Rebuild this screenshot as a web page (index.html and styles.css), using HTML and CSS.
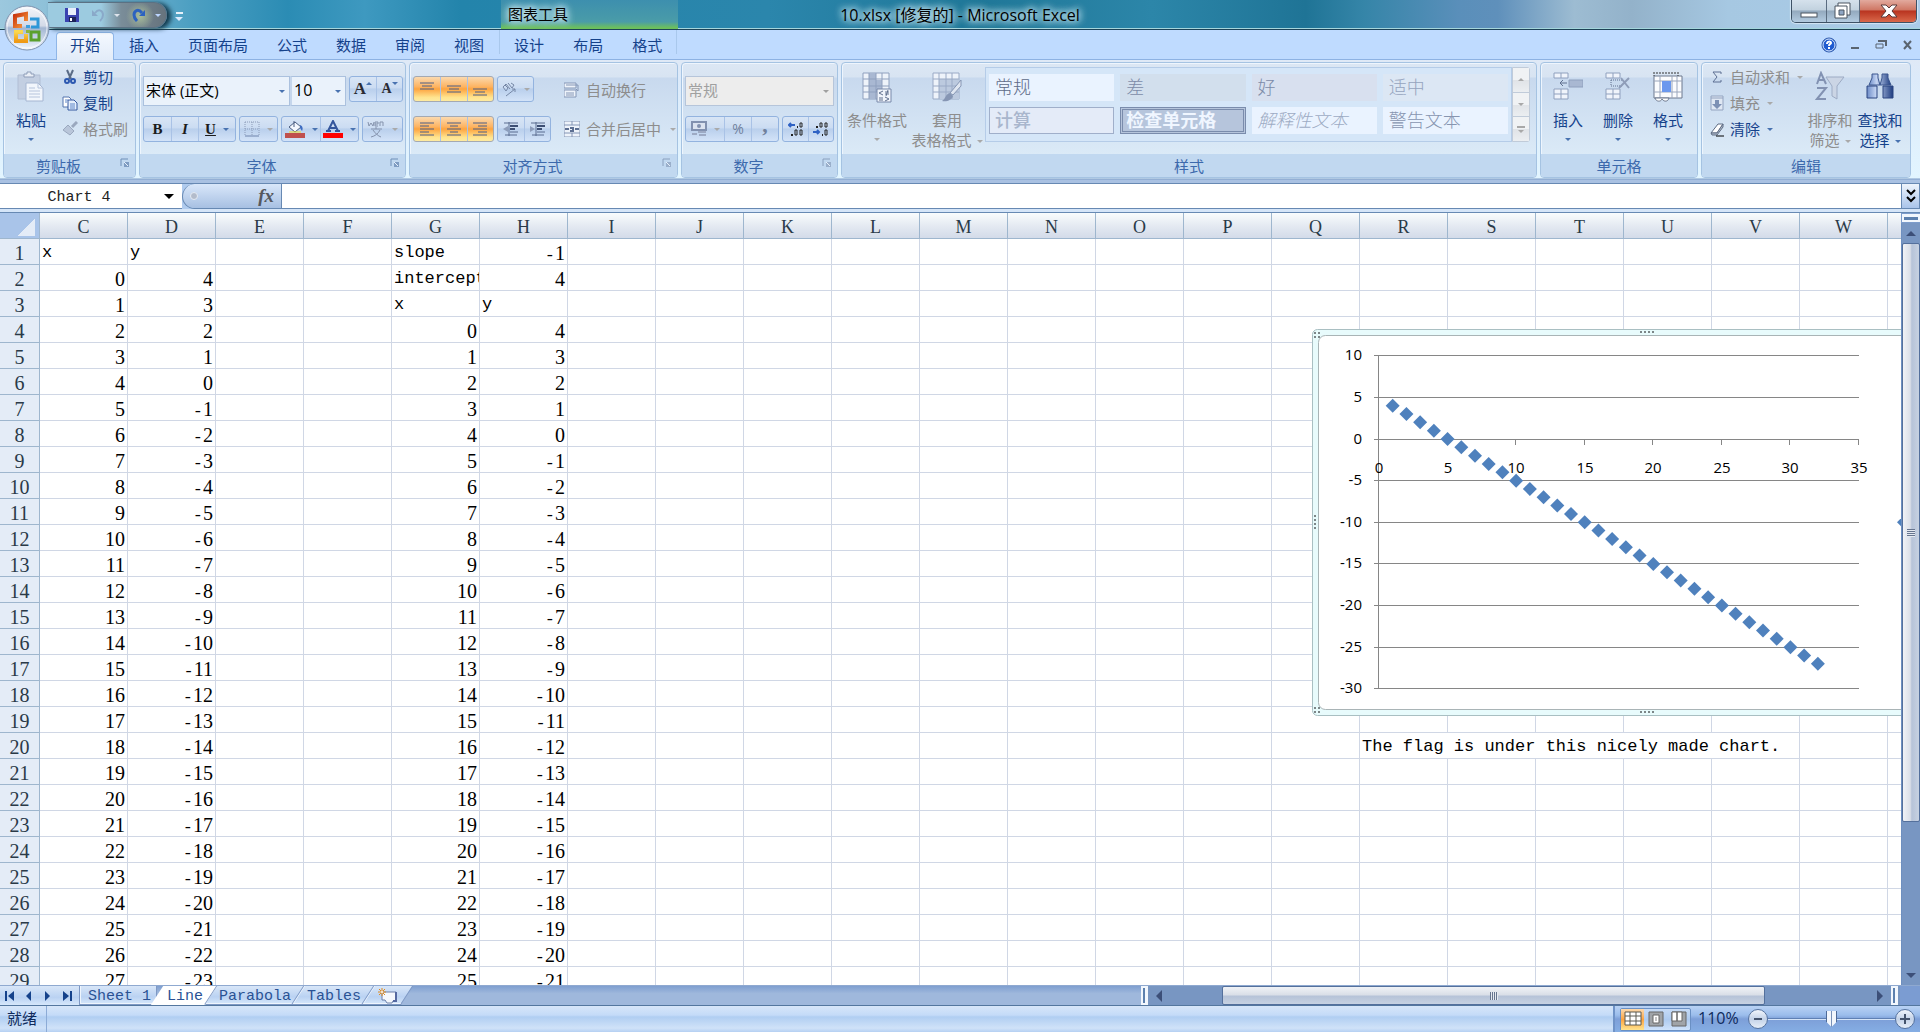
FILE: index.html
```html
<!DOCTYPE html>
<html lang="zh-CN">
<head>
<meta charset="utf-8">
<title>10.xlsx [修复的] - Microsoft Excel</title>
<link rel="stylesheet" href="styles.css">
</head>
<body>
<header class="titlebar">
  <div class="title-left">
    <button class="orb" aria-label="Office">
      <svg width="46" height="46" viewBox="0 0 46 46">
        <defs>
          <linearGradient id="orbFill" x1="0" y1="0" x2="0" y2="1"><stop offset="0" stop-color="#f4f6fa"/><stop offset=".45" stop-color="#d3dae8"/><stop offset=".5" stop-color="#a3b6d2"/><stop offset="1" stop-color="#f2f8ff"/></linearGradient>
          <linearGradient id="red" x1="0" y1="0" x2="1" y2="1"><stop offset="0" stop-color="#c8340c"/><stop offset="1" stop-color="#f99a3c"/></linearGradient>
          <linearGradient id="yel" x1="0" y1="0" x2="0" y2="1"><stop offset="0" stop-color="#fbd84c"/><stop offset="1" stop-color="#ef9a16"/></linearGradient>
        </defs>
        <circle cx="23" cy="23" r="22" fill="url(#orbFill)" stroke="#7f93ae"/>
        <circle cx="23" cy="23" r="20" fill="none" stroke="#fff" stroke-opacity=".7"/>
        <path d="M18 21h-7V11l11-2v7" fill="none" stroke="url(#red)" stroke-width="4"/>
        <path d="M26 14h8v8h-7" fill="none" stroke="#2e97d8" stroke-width="3"/>
        <path d="M19 27h-7v9h10v-7" fill="none" stroke="url(#yel)" stroke-width="4"/>
        <path d="M27 27h8v8h-8z" fill="none" stroke="#5aa02c" stroke-width="3"/>
        <path d="M22 20h4v3h-4z" fill="#3a9fe0"/>
        <path d="M22 25h4v3h-4z" fill="#8cb83c"/>
      </svg>
    </button>
    <div class="qat">
      <button class="flat" aria-label="保存"><svg width="14" height="14" viewBox="0 0 14 14"><path d="M0 0h13l1 1v13H0z" fill="#3a43b0"/><path d="M3 0h8v7H3z" fill="#e8eefb"/><path d="M4 9h7v5H4z" fill="#1c2358"/><path d="M5 10h2v3H5z" fill="#fff"/></svg></button>
      <button class="flat" aria-label="撤消"><svg width="14" height="14" viewBox="0 0 14 14"><path d="M1 2v6h6z" fill="#8aa9c9"/><path d="M4 5c4-5 8-2 8 2 0 2-1 4-3 6" fill="none" stroke="#8aa9c9" stroke-width="2"/></svg><i class="caret pale"></i></button>
      <button class="flat" aria-label="恢复"><svg width="14" height="14" viewBox="0 0 14 14"><path d="M13 2v6H7z" fill="#2c62c0"/><path d="M10 5C6 0 2 3 2 7c0 2 1 4 3 6" fill="none" stroke="#2c62c0" stroke-width="3"/></svg><i class="caret blue"></i></button>
    </div>
    <button class="flat qat-more" aria-label="自定义快速访问工具栏"><i></i><i class="caret"></i></button>
    <div class="context-title"><span>图表工具</span></div>
  </div>
  <h1>10.xlsx [修复的] - Microsoft Excel</h1>
  <div class="window-buttons">
    <button aria-label="最小化"><svg width="34" height="22" viewBox="0 0 34 22"><rect x="9" y="13" width="16" height="4" fill="#fff" stroke="#4a5460"/></svg></button>
    <button aria-label="还原"><svg width="32" height="22" viewBox="0 0 32 22"><path d="M11 3h12v12h-12z" fill="#fff" stroke="#4a5460"/><path d="M8 6h12v12H8z" fill="#fff" stroke="#4a5460"/><path d="M12 10h5v5h-5z" fill="#8fa6c4" stroke="#4a5460"/></svg></button>
    <button class="close" aria-label="关闭"><svg width="56" height="22" viewBox="0 0 56 22"><path d="M21 5h5l3 3 3-3h5l-5 6 5 6h-5l-3-3-3 3h-5l5-6z" fill="#fff" stroke="#5a3a3a"/></svg></button>
  </div>
</header>

<nav class="tabs">
  <button class="tab active">开始</button>
  <button class="tab">插入</button>
  <button class="tab">页面布局</button>
  <button class="tab">公式</button>
  <button class="tab">数据</button>
  <button class="tab">审阅</button>
  <button class="tab">视图</button>
  <div class="context-tabs">
    <button class="tab">设计</button>
    <button class="tab">布局</button>
    <button class="tab">格式</button>
  </div>
  <div class="doc-buttons">
    <button class="flat" aria-label="帮助"><svg width="16" height="16" viewBox="0 0 16 16"><circle cx="8" cy="8" r="7" fill="#1f5bd0" stroke="#2a56a8"/><circle cx="8" cy="8" r="6" fill="none" stroke="#dce9fc"/><path d="M6 7c0-3 4-3 4-1 0 1-2 1-2 3M8 10v2" fill="none" stroke="#fff" stroke-width="2"/></svg></button>
    <button class="flat" aria-label="最小化窗口"><svg width="16" height="16" viewBox="0 0 16 16"><path d="M4 11h8" stroke="#5a6470" stroke-width="2"/></svg></button>
    <button class="flat" aria-label="还原窗口"><svg width="16" height="16" viewBox="0 0 16 16"><path d="M5 4h8v5" fill="none" stroke="#5a6470" stroke-width="2"/><path d="M3 7h7v4H3z" fill="none" stroke="#5a6470"/></svg></button>
    <button class="flat" aria-label="关闭窗口"><svg width="16" height="16" viewBox="0 0 16 16"><path d="M5 4l7 8M12 4l-7 8" stroke="#5a6470" stroke-width="2"/></svg></button>
  </div>
</nav>

<section class="ribbon">
  <div class="group clipboard">
    <div class="body">
      <button class="big"><svg width="30" height="32" viewBox="0 0 30 32"><path d="M2 4h22v24H2z" fill="#c3cfe2" stroke="#b1bed4"/><path d="M8 6V3h3V1h4v2h3v3z" fill="#e9eef6" stroke="#8e9db8"/><path d="M10 12h12l5 5v13H10z" fill="#f2f6fc" stroke="#a5b6d2"/><path d="M22 12v5h5M13 17h6M13 20h11M13 23h11M13 26h11" fill="none" stroke="#b6c4dc"/></svg><span>粘贴</span><i class="caret"></i></button>
      <div class="stack">
        <button class="small"><svg width="16" height="16" viewBox="0 0 16 16"><path d="M5 1l4 9M11 1L7 10" stroke="#5b6c86" stroke-width="2"/><circle cx="5" cy="12" r="2" fill="none" stroke="#2c58b0" stroke-width="2"/><circle cx="11" cy="12" r="2" fill="none" stroke="#2c58b0" stroke-width="2"/></svg><span>剪切</span></button>
        <button class="small"><svg width="16" height="16" viewBox="0 0 16 16"><path d="M1 2h6l2 2v8H1z" fill="#fff" stroke="#5474ae"/><path d="M6 5h6l3 3v7H6z" fill="#e6effc" stroke="#3558a0"/><path d="M8 9h5M8 11h5M8 13h5M3 5h3M3 7h2" stroke="#5f86c8"/></svg><span>复制</span></button>
        <button class="small" disabled><svg width="16" height="16" viewBox="0 0 16 16"><path d="M15 1l-5 5" stroke="#9aa8be" stroke-width="3"/><path d="M6 4l6 6-4 4-7-5z" fill="#b9c6da" stroke="#9aa8be"/></svg><span>格式刷</span></button>
      </div>
    </div>
    <footer><span>剪贴板</span><button class="launch" aria-label="剪贴板选项"><svg width="9" height="9" viewBox="0 0 9 9"><path d="M1 8V1h7" fill="none" stroke="#6f8fb8"/><path d="M4 4h5v5H4z" fill="#7f9cc2"/><path d="M4 4l4 4" stroke="#e8f1fb"/></svg></button></footer>
  </div>

  <div class="group font">
    <div class="body rows">
      <div class="line">
        <div class="combos">
          <label class="combo font-name"><select aria-label="字体"><option>宋体 (正文)</option></select></label>
          <label class="combo font-size"><select aria-label="字号"><option>10</option></select></label>
        </div>
        <div class="cluster">
          <button aria-label="增大字号" class="serif-lg">A<i class="up"></i></button>
          <button aria-label="减小字号" class="serif-sm">A<i class="down"></i></button>
        </div>
      </div>
      <div class="line">
        <div class="cluster wide"><button class="biu"><b>B</b></button><button class="biu"><em>I</em></button><button class="biu underline"><u>U</u><i class="caret"></i></button></div>
        <div class="cluster"><button disabled aria-label="边框"><svg width="16" height="16" viewBox="0 0 16 16"><path d="M1 1h14M1 8h14M1 1v14M8 1v14M15 1v14" stroke="#8b9bb8" stroke-dasharray="1 1"/><path d="M1 15h14" stroke="#6f84ac"/></svg><i class="caret"></i></button></div>
        <div class="cluster fills"><button aria-label="填充颜色"><svg width="20" height="18" viewBox="0 0 20 18"><path d="M4 7l6-5 6 5-6 5z" fill="#f4f8fe" stroke="#4a5d80"/><path d="M9 7V1" stroke="#4a5d80"/><path d="M15 5c3 1 3 4 2 6l-2-3z" fill="#3d6cc0"/><path d="M4 12h12" stroke="#f4e020"/><path d="M0 13h20v5H0z" fill="#c0504d"/></svg><i class="caret"></i></button><button aria-label="字体颜色"><svg width="20" height="18" viewBox="0 0 20 18"><path d="M5 11L10 1l5 10M7 8h6M3 11h5M12 11h5" fill="none" stroke="#34569c" stroke-width="2"/><path d="M0 13h20v5H0z" fill="#f00"/></svg><i class="caret"></i></button></div>
        <div class="cluster"><button disabled aria-label="拼音指南"><svg width="18" height="18" viewBox="0 0 18 18"><path d="M1 2l1 4 2-3 2 3 1-4M8 4h3V2H8v4h3M13 6V2h3v4M10 0l1-1M4 9h11M9 7v2M6 10c2 3 5 6 8 7M13 10c-2 4-5 6-9 7" fill="none" stroke="#8492ac"/></svg><i class="caret"></i></button></div>
      </div>
    </div>
    <footer><span>字体</span><button class="launch" aria-label="字体选项"><svg width="9" height="9" viewBox="0 0 9 9"><path d="M1 8V1h7" fill="none" stroke="#6f8fb8"/><path d="M4 4h5v5H4z" fill="#7f9cc2"/><path d="M4 4l4 4" stroke="#e8f1fb"/></svg></button></footer>
  </div>

  <div class="group align">
    <div class="body columns">
      <div class="rows">
        <div class="line">
          <div class="cluster on"><button aria-label="顶端对齐"><svg width="16" height="16" viewBox="0 0 16 16"><path d="M1 2h14M3 5h10M1 8h14" stroke="#4d5f86"/></svg></button><button aria-label="垂直居中"><svg width="16" height="16" viewBox="0 0 16 16"><path d="M1 5h14M3 8h10M1 11h14" stroke="#4d5f86"/></svg></button><button aria-label="底端对齐"><svg width="16" height="16" viewBox="0 0 16 16"><path d="M1 8h14M3 11h10M1 14h14" stroke="#4d5f86"/></svg></button></div>
          <div class="cluster orient"><button disabled aria-label="方向"><svg width="16" height="16" viewBox="0 0 16 16"><path d="M2 6l3-3 4 5M2 6l3 4 2-3-3-3M7 2l4 5 2-3-3-2M5 15L14 8M14 8h-3M14 8v3" fill="none" stroke="#7687a6"/></svg><i class="caret"></i></button></div>
        </div>
        <div class="line">
          <div class="cluster on"><button aria-label="左对齐"><svg width="16" height="16" viewBox="0 0 16 16"><path d="M1 2h14M1 5h9M1 8h14M1 11h9M1 14h14" stroke="#4d5f86"/></svg></button><button aria-label="居中"><svg width="16" height="16" viewBox="0 0 16 16"><path d="M1 2h14M4 5h8M1 8h14M4 11h8M1 14h14" stroke="#4d5f86"/></svg></button><button aria-label="右对齐"><svg width="16" height="16" viewBox="0 0 16 16"><path d="M1 2h14M6 5h9M1 8h14M6 11h9M1 14h14" stroke="#4d5f86"/></svg></button></div>
          <div class="cluster indent"><button aria-label="减少缩进"><svg width="16" height="16" viewBox="0 0 16 16"><path d="M1 2h14M7 11h8M2 14h12M6 1v14" stroke="#5b6d90"/><path d="M7 5h8M7 8h5" stroke="#3d4f74" stroke-width="2"/><path d="M5 5L0 8l5 3z" fill="#8d9dba"/></svg></button><button aria-label="增加缩进"><svg width="16" height="16" viewBox="0 0 16 16"><path d="M1 2h14M7 11h8M2 14h12M6 1v14" stroke="#5b6d90"/><path d="M7 5h8M7 8h5" stroke="#3d4f74" stroke-width="2"/><path d="M0 5l5 3-5 3z" fill="#8d9dba"/></svg></button></div>
        </div>
      </div>
      <div class="rule"></div>
      <div class="wraps">
        <button class="small" disabled><svg width="16" height="16" viewBox="0 0 16 16"><path d="M0 1h12v5H0zM0 8h12v7H0z" fill="#eef3fa" stroke="#8496b6"/><path d="M2 3h12M2 11h8M2 13h8M14 3v6l-2-2" fill="none" stroke="#8496b6"/></svg><span>自动换行</span></button>
        <button class="small" disabled><svg width="16" height="16" viewBox="0 0 16 16"><path d="M0 0h16v16H0zM0 4h16M0 12h16M8 0v4M8 12v4" fill="#eef3fa" stroke="#8496b6"/><path d="M1 8h4M11 8h4M6 7h3v3H6" fill="none" stroke="#5d6f92" stroke-width="2"/></svg><span>合并后居中</span><i class="caret"></i></button>
      </div>
    </div>
    <footer><span>对齐方式</span><button class="launch" aria-label="对齐选项"><svg width="9" height="9" viewBox="0 0 9 9"><path d="M1 8V1h7" fill="none" stroke="#8aa0be"/><path d="M4 4h5v5H4z" fill="#9aafcb"/><path d="M4 4l4 4" stroke="#e8f1fb"/></svg></button></footer>
  </div>

  <div class="group number">
    <div class="body rows">
      <label class="combo off"><select aria-label="数字格式" disabled><option>常规</option></select></label>
      <div class="line">
        <div class="cluster money"><button disabled aria-label="会计数字格式"><svg width="16" height="16" viewBox="0 0 16 16"><path d="M1 1h14v8H1z" fill="#dbe3f0" stroke="#8191b0" stroke-width="2"/><circle cx="8" cy="5" r="2" fill="#8191b0"/><path d="M7 10h8v2H7zM8 13h7v2H8zM1 12h5v2H1z" fill="#9daac4"/></svg><i class="caret"></i></button><button disabled>%</button><button disabled class="comma">,</button></div>
        <div class="cluster"><button class="dec" aria-label="增加小数位数"><svg width="16" height="14" viewBox="0 0 16 14"><path d="M7 3H1M3 1L1 3l2 2" fill="none" stroke="#2f62c4" stroke-width="2"/><path d="M9 5h1M3 13h2" stroke="#222" stroke-width="2"/><path d="M12 1h2v4h-2zM7 8h2v5H7zM12 8h2v5h-2z" fill="none" stroke="#222"/></svg></button><button class="dec" aria-label="减少小数位数"><svg width="16" height="14" viewBox="0 0 16 14"><path d="M0 10h6M4 8l2 2-2 2" fill="none" stroke="#2f62c4" stroke-width="2"/><path d="M3 5h2M9 13h1" stroke="#222" stroke-width="2"/><path d="M7 1h2v4H7zM12 1h2v4h-2zM12 8h2v5h-2z" fill="none" stroke="#222"/></svg></button></div>
      </div>
    </div>
    <footer><span>数字</span><button class="launch" aria-label="数字选项"><svg width="9" height="9" viewBox="0 0 9 9"><path d="M1 8V1h7" fill="none" stroke="#8aa0be"/><path d="M4 4h5v5H4z" fill="#9aafcb"/><path d="M4 4l4 4" stroke="#e8f1fb"/></svg></button></footer>
  </div>

  <div class="group styles">
    <div class="body">
      <button class="big w70" disabled><svg width="30" height="32" viewBox="0 0 30 32"><path d="M1 2h26v26H1z" fill="#eef3fa" stroke="#8fa0be"/><path d="M7 2h7v26H7zM14 9h6v12h-6z" fill="#a9b8d2"/><path d="M1 8h26M1 15h26M1 21h26M7 2v26M14 2v26M20 2v26" stroke="#8fa0be"/><path d="M15 18h14v13H15z" fill="#f0f4fb" stroke="#7889aa"/><path d="M21 20l-4 2 4 2M23 21h4M23 23h4M26 19l-2 6M17 27h4M17 29h4M23 26l4 2-4 2" fill="none" stroke="#61718f"/></svg><span>条件格式</span><i class="caret"></i></button>
      <button class="big w70" disabled><svg width="30" height="32" viewBox="0 0 30 32"><path d="M1 2h26v26H1z" fill="#eef3fa" stroke="#9aaac6"/><path d="M7 8h20v20H7z" fill="#bccadf"/><path d="M1 8h26M1 15h26M1 21h26M7 2v26M14 2v26M20 2v26" stroke="#9aaac6"/><path d="M29 9v6l-8 9-3-2z" fill="#dfe6f1" stroke="#8696b4"/><path d="M18 22l3 3c-1 4-6 6-11 5 4-2 3-7 8-8z" fill="#8696b4"/></svg><span>套用<br>表格格式<i class="caret"></i></span></button>
      <div class="gallery">
        <div class="swatches">
          <button>常规</button><button class="bad">差</button><button class="good">好</button><button class="neutral">适中</button>
          <button class="calc">计算</button><button class="check">检查单元格</button><button class="explain">解释性文本</button><button class="warn">警告文本</button>
        </div>
        <div class="gallery-nav">
          <button disabled aria-label="上一行"><i class="up"></i></button>
          <button disabled aria-label="下一行"><i class="down"></i></button>
          <button disabled aria-label="其他"><i class="bar"></i><i class="down"></i></button>
        </div>
      </div>
    </div>
    <footer><span>样式</span></footer>
  </div>

  <div class="group cells">
    <div class="body">
      <button class="big w50"><svg width="30" height="32" viewBox="0 0 30 32"><path d="M1 2h14v5H1zM1 18h14v10H1zM8 2v5M8 18v10M1 23h14" fill="#f0f4fb" stroke="#8fa0be"/><path d="M16 9h14v7H16z" fill="#a9b8d2" stroke="#8fa0be"/><path d="M14 12H7M10 9l-3 3 3 3" fill="none" stroke="#61718f"/></svg><span>插入</span><i class="caret"></i></button>
      <button class="big w50"><svg width="30" height="32" viewBox="0 0 30 32"><path d="M3 2h14v5H3zM3 18h14v10H3zM10 2v5M10 18v10M3 23h14" fill="#f0f4fb" stroke="#8fa0be"/><path d="M8 9h12M8 15h12M8 9v6" stroke="#61718f" stroke-dasharray="1 1"/><path d="M18 7l8 10M26 7L16 17" stroke="#8f9db8" stroke-width="2"/></svg><span>删除</span><i class="caret"></i></button>
      <button class="big w50"><svg width="32" height="32" viewBox="0 0 32 32"><path d="M2 5h28v22H2z" fill="#fbfcfe" stroke="#6c788e"/><path d="M2 10h28M2 21h28M8 5v22M20 5v22M25 5v22" stroke="#9aa6bc"/><path d="M10 10h9v11h-9z" fill="#6b98ee"/><path d="M2 1v4M26 1v4M4 2h20" stroke="#333" stroke-dasharray="2 1"/><path d="M3 27c1 4 6 4 7 1 2 3 6 3 7-1z" fill="#fff" stroke="#6c788e"/></svg><span>格式</span><i class="caret"></i></button>
    </div>
    <footer><span>单元格</span></footer>
  </div>

  <div class="group edit">
    <div class="body">
      <div class="stack">
        <button class="small" disabled><svg width="14" height="16" viewBox="0 0 14 16"><path d="M11 5V3H3l4 5-4 5h8v-2" fill="none" stroke="#5d6f92"/></svg><span>自动求和</span><i class="caret"></i></button>
        <button class="small" disabled><svg width="14" height="16" viewBox="0 0 14 16"><path d="M1 1h12v14H1z" fill="#dfe7f3" stroke="#93a3c0"/><path d="M1 3h12" stroke="#93a3c0"/><path d="M5 5h4v4h3l-5 5-5-5h3z" fill="#7d90b4"/></svg><span>填充</span><i class="caret"></i></button>
        <button class="small"><svg width="14" height="16" viewBox="0 0 14 16"><path d="M8 3h5L7 12H1z" fill="#fff" stroke="#5f6d84"/><path d="M1 12l6 0 6-9v3l-6 8H2z" fill="#b9c2d0" stroke="#5f6d84"/><path d="M6 15h8" stroke="#000"/></svg><span>清除</span><i class="caret"></i></button>
      </div>
      <button class="big w50" disabled><svg width="30" height="32" viewBox="0 0 30 32"><path d="M2 13L6 2l5 11M4 9h5M2 17h9L2 28h9" fill="none" stroke="#8292b2" stroke-width="2"/><path d="M11 6h18l-7 9v13l-5-3V15z" fill="#cbd5e5" stroke="#9dabc4"/></svg><span>排序和<br>筛选<i class="caret"></i></span></button>
      <button class="big w50"><svg width="30" height="32" viewBox="0 0 30 32"><defs><linearGradient id="bino"><stop offset="0" stop-color="#6d8cc8"/><stop offset=".35" stop-color="#c4d4f2"/><stop offset="1" stop-color="#1e3c80"/></linearGradient></defs><path d="M7 3h6v4l2 7H4l3-7zM17 3h6v4l3 7H15l2-7z" fill="url(#bino)" stroke="#3c578f"/><path d="M2 15h10v12H2zM18 15h10v12H18z" fill="url(#bino)" stroke="#2a4580"/></svg><span>查找和<br>选择<i class="caret"></i></span></button>
    </div>
    <footer><span>编辑</span></footer>
  </div>
</section>

<section class="formula-bar">
  <label class="name-box"><input aria-label="名称框" value="Chart 4"><i class="caret"></i></label>
  <button class="fx" aria-label="插入函数"><i class="dot"></i><em>fx</em></button>
  <input class="formula" aria-label="编辑栏">
  <button class="expand" aria-label="展开编辑栏"><svg width="16" height="16" viewBox="0 0 16 16"><path d="M4 2l4 4 4-4M4 9l4 4 4-4" fill="none" stroke="#000" stroke-width="2"/></svg></button>
</section>

<main class="sheet">
  <div class="viewport">
    <table class="grid"><thead><tr id="letters"><th class="corner"><i></i></th></tr></thead><tbody id="rows"></tbody></table>
    <svg class="chart" id="chart" width="1160" height="388" role="img" aria-label="Chart 4"></svg>
  </div>
  <div class="vscroll">
    <i class="split"></i>
    <button class="flat" aria-label="向上滚动"><i class="up"></i></button>
    <div class="thumb"><i></i></div>
    <button class="flat" aria-label="向下滚动"><i class="down"></i></button>
  </div>
</main>

<section class="sheet-bar">
  <div class="sheet-tabs">
    <div class="nav">
      <button class="flat" aria-label="第一张"><svg width="10" height="12" viewBox="0 0 10 12"><path d="M1 1v10" stroke="#15428b" stroke-width="2"/><path d="M9 1v10L3 6z" fill="#15428b"/></svg></button>
      <button class="flat" aria-label="上一张"><svg width="10" height="12" viewBox="0 0 10 12"><path d="M7 1v10L2 6z" fill="#15428b"/></svg></button>
      <button class="flat" aria-label="下一张"><svg width="10" height="12" viewBox="0 0 10 12"><path d="M2 1v10l5-5z" fill="#15428b"/></svg></button>
      <button class="flat" aria-label="最后一张"><svg width="10" height="12" viewBox="0 0 10 12"><path d="M1 1v10l6-5z" fill="#15428b"/><path d="M9 1v10" stroke="#15428b" stroke-width="2"/></svg></button>
    </div>
    <button class="stab first">Sheet 1</button>
    <button class="stab current">Line</button>
    <button class="stab">Parabola</button>
    <button class="stab">Tables</button>
    <button class="stab new" aria-label="插入工作表"><svg width="20" height="16" viewBox="0 0 20 16"><path d="M5 4h14v9h-3l-1 2h-5l-2-3H5z" fill="#f4f7fc" stroke="#6b7fa8"/><path d="M19 4v9h-3" fill="none" stroke="#5468a0" stroke-width="2"/><path d="M5 0v8M1 4h8M2 1l6 6M8 1L2 7" stroke="#e08a1c"/><circle cx="5" cy="4" r="1" fill="#fff"/></svg></button>
  </div>
  <div class="hscroll">
    <i class="split"></i>
    <button class="flat" aria-label="向左滚动"><i class="left"></i></button>
    <div class="thumb"><i></i></div>
    <button class="flat" aria-label="向右滚动"><i class="right"></i></button>
    <i class="split"></i>
  </div>
</section>

<footer class="status">
  <span class="ready">就绪</span>
  <div class="zoom">
    <div class="views">
      <button class="on" aria-label="普通"><svg width="18" height="16" viewBox="0 0 18 16"><path d="M1 1h16v13H1zM1 5h16M1 10h16M6 1v13M12 1v13" fill="#fff" stroke="#5a5a52"/></svg></button>
      <button aria-label="页面布局"><svg width="16" height="16" viewBox="0 0 16 16"><path d="M1 1h14v14H1z" fill="#a0a4a8" stroke="#666"/><path d="M5 4h6v8H5z" fill="#fff" stroke="#666"/><path d="M7 7h2M7 9h2" stroke="#888"/></svg></button>
      <button aria-label="分页预览"><svg width="16" height="16" viewBox="0 0 16 16"><path d="M1 1h14v14H1z" fill="#a0a4a8" stroke="#666"/><path d="M1 1h5v9H1zM6 1h5v9H6z" fill="#fff" stroke="#666"/></svg></button>
    </div>
    <span class="percent">110%</span>
    <button class="round" aria-label="缩小"><svg width="18" height="18" viewBox="0 0 18 18"><path d="M5 9h8" stroke="#44536c" stroke-width="2"/></svg></button>
    <input type="range" min="10" max="200" value="105" aria-label="显示比例">
    <button class="round" aria-label="放大"><svg width="18" height="18" viewBox="0 0 18 18"><path d="M4 9h10M9 4v10" stroke="#44536c" stroke-width="2"/></svg></button>
  </div>
</footer>
<script src="script.js"></script>
</body>
</html>
```
FILE: styles.css
```css
* { box-sizing: border-box; }

body {
  margin: 0;
  height: 100vh;
  display: flex;
  flex-direction: column;
  overflow: hidden;
  background: #bfdbff;
  color: #15428b;
  font: 15px/20px "Open Sans", "Noto Sans CJK SC", sans-serif;
}

button, input, select { font: inherit; color: inherit; margin: 0; padding: 0; border: 0; background: none; border-radius: 0; }
button { display: flex; align-items: center; justify-content: center; white-space: nowrap; }
button:disabled { color: #8d8d8d; }
svg { display: block; flex: none; }

.caret, .down { width: 0; height: 0; flex: none; border: 3px solid transparent; border-top-color: #4872b0; border-bottom: 0; }
.up { width: 0; height: 0; flex: none; border: 3px solid transparent; border-bottom-color: #4872b0; border-top: 0; }
button:disabled .caret { border-top-color: #a9a9a9; }
.caret.pale { border-top-color: #dde4ec; }
.caret.blue { border-top-color: #bcd6ff; }

/* Title bar */
.titlebar {
  flex: none;
  height: 30px;
  display: grid;
  grid-template-columns: 1fr auto 1fr;
  border-bottom: 1px solid #1c4256;
  box-shadow: inset 0 -1px #a5d6dc;
  background: linear-gradient(90deg, #9cc8de 0, #7fb9d3 5%, #4c9fc2 10%, #2b8cb4 15%, #3e99c0 19%, #2384ab 24%, #2b86ac 40%, #1f7798 51%, #2c86a9 60%, #1f7496 68%, #3585a8 71%, #5a8fba 76%, #5f90bb 78%, #9dbcd2 82%, #93b2ca 85%, #a6c8e2 90%, #aacbe8 100%);
}
.title-left { display: flex; position: relative; }
.orb { position: absolute; z-index: 2; left: 4px; top: 5px; }
.qat {
  width: 119px;
  height: 26px;
  margin: 2px 0 0 48px;
  padding-left: 17px;
  display: flex;
  gap: 12px;
  border: 1px solid #5b7183;
  border-left: 0;
  border-radius: 0 13px 13px 0;
  background: radial-gradient(circle at 92px 13px, #a9bd9a 0, transparent 14px), linear-gradient(90deg, #9ccbe0 45%, #7a8d99 62%, #66737d);
  box-shadow: 4px 1px 5px #0f3345;
}
.qat .flat { gap: 9px; }
.qat-more { flex-direction: column; gap: 3px; margin: 4px 0 0 8px; height: 24px; width: 8px; }
.qat-more i:first-child { width: 7px; height: 2px; background: #e8f2fa; }
.qat-more .caret { border-width: 4px; border-bottom: 0; border-top-color: #dcecff; }
.context-title {
  width: 177px;
  margin-left: 318px;
  padding: 4px 7px 0;
  color: #000;
  background: linear-gradient(#3d8fae, #4a9ca8 75%, #6cc05c 96%);
}
.context-title span, .titlebar h1 { text-shadow: 0 0 6px #d8f0f8, 0 0 8px #d8f0f8, 0 0 10px #d8f0f8; }
.titlebar h1 { margin: 5px 0 0; font-size: 16px; font-weight: 400; line-height: 20px; color: #000; }
.window-buttons { display: flex; justify-self: end; height: 23px; margin-right: 3px; border: 1px solid #3e5266; border-top: 0; border-radius: 0 0 5px 5px; overflow: hidden; box-shadow: 0 0 1px 1px #d4e6f4; }
.window-buttons button { border-right: 1px solid #5a6c80; background: linear-gradient(#d5e1ec, #c2d2df 45%, #93a9be 50%, #b3cbe0); }
.window-buttons .close { border: 0; background: linear-gradient(#e2aa9e, #cf7764 45%, #b93420 50%, #d9684a); }

/* Ribbon tabs */
.tabs { flex: none; height: 30px; display: flex; gap: 1px; padding-left: 56px; border-bottom: 1px solid #8db2e3; }
.tab { padding: 0 14px; height: 30px; padding-bottom: 1px; }
.tab.active { margin-top: 2px; height: 28px; padding-bottom: 3px; border: 1px solid #8fb6e8; border-bottom: 0; padding-left: 13px; padding-right: 13px; border-radius: 4px 4px 0 0; background: linear-gradient(#f4f9ff, #e2ebf8); }
.context-tabs { display: flex; gap: 1px; border: solid #a9c8ec; border-width: 0 1px; height: 24px; }
.doc-buttons { margin-left: auto; display: flex; gap: 10px; padding-right: 5px; }

/* Ribbon */
.ribbon { flex: none; height: 123px; display: flex; gap: 3px; padding: 2px 9px 5px 3px; background: linear-gradient(#dfe9f6, #dceafa 15%, #e2f5ff 118px, #7d9cc6 119px, #a9c1e2 120px, #a9c1e2); }
.group { display: flex; flex-direction: column; border: 1px solid #a5c3e2; border-radius: 4px; overflow: hidden; box-shadow: inset 1px 1px #eef5fd; background: linear-gradient(#dce7f4 0, #d8e4f2 14px, #c8d9ee 15px, #dbeaf7 92px); }
.group footer { height: 23px; flex: none; display: flex; align-items: center; text-align: center; color: #3c69ac; background: #c1d8f0; }
.group footer span { flex: 1; }
.launch { width: 22px; height: 20px; padding: 0 0 6px; }
.clipboard { width: 133px; }
.font { width: 267px; }
.align { width: 269px; }
.number { width: 157px; }
.styles { flex: 1; }
.cells { width: 158px; }
.edit { width: 210px; }
.body { flex: 1; display: flex; min-height: 0; }
.rows { display: flex; flex-direction: column; gap: 10px; padding: 13px 3px 0; }
.body .rows { padding: 0; }
.columns { padding: 13px 3px 0; }
.line { display: flex; gap: 3px; align-items: flex-start; height: 30px; }

.big { flex-direction: column; justify-content: flex-start; padding-top: 8px; line-height: 20px; }
.big svg { margin-bottom: 7px; }
.big span { text-align: center; }
.big > .caret { margin-top: 8px; }
.big span .caret { display: inline-block; vertical-align: middle; margin-left: 5px; }
.clipboard .big { width: 54px; margin-right: 4px; }
.big.w70 { width: 70px; }
.big.w50 { width: 50px; }
.cells .body { padding-left: 2px; }
.stack { display: flex; flex-direction: column; padding-top: 1px; }
.small { height: 26px; gap: 5px; justify-content: flex-start; }
.small .caret { margin-left: 3px; }

.combos { display: flex; }
.combo { display: grid; align-items: center; height: 30px; border: 1px solid #abc1de; background: #eaf2fb; color: #000; }
.combo + .combo { border-left: 2px solid #c5d6ec; }
.combo select { grid-area: 1 / 1; appearance: none; width: 100%; padding: 0 0 2px 2px; }
.combo::after { content: ""; grid-area: 1 / 1; justify-self: end; margin-right: 4px; border: 3px solid transparent; border-top-color: #4872b0; border-bottom: 0; pointer-events: none; }
.combo.off { background: #ededed; border-color: #b6c5da; }
.combo.off select { color: #a0a0a0; opacity: 1; }
.combo.off::after { border-top-color: #a0a0a0; }
.font-name { width: 147px; }
.font-size { width: 56px; }
.font-size select { font-size: 16px; }
.number .combo { width: 149px; }

.cluster { display: flex; height: 26px; border: 1px solid #93b3df; border-radius: 3px; background: linear-gradient(#d8e5f5, #cbdcf2 45%, #b9cfec 50%, #d3e3f8); }
.cluster button { gap: 7px; min-width: 26px; padding: 0 4px; }
.cluster button + button { border-left: 1px solid #a9c2e6; }
.cluster.on { background: linear-gradient(#fbd9ae, #fdb463 40%, #fda440 50%, #ffe48f 85%, #fdeaa0); border-color: #a4a9b2; width: 81px; }
.cluster.on button { width: 27px; padding: 0; }
.cluster .serif-lg, .cluster .serif-sm { width: 26px; min-width: 0; font: bold 17px/20px "Liberation Serif", serif; color: #2b2b33; gap: 0; padding: 0; }
.cluster .serif-sm { font-size: 14px; }
.serif-lg .up, .serif-sm .down { align-self: flex-start; margin-top: 5px; }
.cluster .biu { width: 27px; font: bold 15px/20px "Liberation Serif", serif; color: #1c1c1c; }
.cluster .biu.underline { width: 37px; }
.fills button { width: 38px; }
.orient button { width: 35px; }
.indent button { width: 25px; }
.number .money button { width: 27px; color: #70809c; font-size: 14px; }
.number .money button:first-child { width: 38px; }
.number .money .comma { font: bold 22px/10px "Liberation Serif", serif; padding-bottom: 8px; }
.number .dec { min-width: 25px; }
.rule { width: 2px; height: 56px; margin: 4px 8px 0 5px; background: linear-gradient(90deg, #a6bddc 50%, #f0f6fd 50%); }
.wraps { display: flex; flex-direction: column; gap: 13px; padding-top: 1px; }
.wraps .small { gap: 6px; }

/* Cell style gallery */
.gallery { flex: 1; display: flex; height: 75px; margin: 4px 6px 0 3px; }
.swatches { flex: 1; display: grid; grid-template-columns: repeat(4, 1fr); grid-template-rows: 27px 27px; gap: 6px; padding: 6px 3px 7px; border: 1px solid #b5cce8; background: #d5e6f8; }
.swatches button { justify-content: flex-start; padding: 0 0 3px 6px; font: 300 18px/22px "Noto Sans CJK SC", sans-serif; color: #5d6a88; background: #eaf3ff; }
.swatches .bad { background: #d2dfed; color: #7c8ba8; }
.swatches .good { background: #d8e0ef; color: #7c8ba8; }
.swatches .neutral { background: #dce7f4; color: #96a4be; }
.swatches .calc { background: #e4ebf8; border: 1px solid #a0afca; color: #a9b6cd; padding-left: 5px; font-weight: 500; }
.swatches .check { background: #b6c5dc; border: 3px double #7a8cac; color: #f0f6ff; font-weight: 700; padding-left: 3px; }
.swatches .explain { font-style: italic; color: #9dabc4; }
.swatches .warn { color: #8795b0; }
.gallery-nav { width: 18px; display: flex; flex-direction: column; border: 1px solid #c0cbd9; border-radius: 0 3px 3px 0; background: #c0cbd9; gap: 1px; }
.gallery-nav button { flex: 1; flex-direction: column; gap: 2px; background: linear-gradient(#f0f2f4 50%, #e0e3e7 50%, #ebeef1); }
.gallery-nav .up { border-bottom-color: #a8a8a8; }
.gallery-nav .down { border-top-color: #a8a8a8; }
.gallery-nav .bar { width: 8px; height: 2px; background: #a8a8a8; }

.edit .stack { padding-left: 8px; width: 103px; }
.edit .small { gap: 6px; }
.edit .stack .caret { margin-left: 1px; }

/* Formula bar */
.formula-bar { flex: none; height: 29px; display: flex; border-top: 1px solid #6789b3; border-bottom: 3px solid #d5e5f8; background: #b0cbee; }
.name-box { width: 182px; display: flex; align-items: center; background: #fff; border-bottom: 1px solid #6789b3; color: #000; }
.name-box input { width: 158px; height: 24px; padding-top: 3px; text-align: center; font: 15px/20px "Liberation Mono", monospace; color: #222; outline: 0; }
.name-box .caret { border-width: 5px; border-bottom: 0; border-top-color: #000; margin-left: 6px; }
.fx { width: 100px; justify-content: space-between; padding: 0 7px; border: 1px solid #6789b3; border-top: 0; border-radius: 13px 0 0 13px; background: linear-gradient(#d9e7fa, #a7c0e2); }
.fx .dot { width: 8px; height: 8px; border-radius: 4px; background: #b3bccb; border: 1px solid #e4ebf4; }
.fx em { font: italic bold 19px/22px "Liberation Serif", serif; color: #55585e; }
.formula { flex: 1; min-width: 0; background: #fff; border-bottom: 1px solid #6789b3; outline: 0; }
.expand { width: 19px; border: 1px solid #6789b3; border-top: 0; background: linear-gradient(#eef4fc, #a9c4ea); }

/* Worksheet */
.sheet { flex: 1; min-height: 0; display: flex; border-top: 1px solid #6789b3; }
.viewport { flex: 1; min-width: 0; position: relative; overflow: hidden; background: #fff; }
.grid { table-layout: fixed; width: 0; border-collapse: separate; border-spacing: 0; color: #000; }
.grid td, .grid th { height: 26px; padding: 3px 2px 0; border: solid #d0d7e5; border-width: 0 1px 1px 0; overflow: hidden; white-space: nowrap; font: 20px/22px "Liberation Serif", serif; text-align: right; }
.grid td.text { font: 17px/22px "Liberation Mono", monospace; text-align: left; }
.grid td i { font: 17px/1px "Liberation Mono", monospace; }
.grid thead th { width: 88px; text-align: center; font-size: 18px; color: #2a3a48; border-color: #9eb6ce; background: linear-gradient(#f9fcfd, #e5eaf2 50%, #d3dbe9); }
.grid tbody th { text-align: center; color: #2a3a48; border-color: #9eb6ce; background: #e4ecf7; }
.grid thead .corner { width: 40px; background: #a9c4e9; padding: 0 4px 2px 0; vertical-align: bottom; }
.corner i { display: block; width: 17px; height: 17px; margin-left: auto; background: linear-gradient(135deg, transparent 50%, #e4ecf7 50%); }

.chart { position: absolute; left: 1312px; top: 116px; font: 15px "Open Sans", sans-serif; }
.chart .frame { fill: #e8fbfc; stroke: #a9bfc2; }
.chart .area { fill: #fff; stroke: #a9b4b6; }
.chart .axis { stroke: #868686; fill: none; shape-rendering: crispEdges; }
.chart .mark { fill: #4f81bd; }
.chart .grip { fill: #7c8688; }
.chart text { fill: #000; }

.vscroll { width: 19px; display: flex; flex-direction: column; border-left: 1px solid #6d8fc0; background: #7896c2; }
.vscroll .split { height: 8px; margin: 1px 0; border: 2px solid #f2f7fd; border-top-width: 3px; background: #5c80ae; outline: 1px solid #7c9ccb; }
.vscroll .flat { height: 20px; }
.vscroll .up { border-width: 5px; border-top: 0; border-bottom-color: #3c4f78; }
.vscroll .down { border-width: 5px; border-bottom: 0; border-top-color: #3c4f78; }
.vscroll .thumb { flex: 0 1 75%; margin-bottom: auto; display: flex; align-items: center; justify-content: center; border: 1px solid #54709c; border-radius: 2px; background: linear-gradient(90deg, #f0f2f6, #dadfe8 45%, #b6c3d8 55%, #c7d2e2); }
.vscroll .thumb i { width: 8px; height: 8px; background: repeating-linear-gradient(#66758f 0 1px, #e4e9f0 1px 2px); }

/* Sheet tabs and horizontal scrolling */
.sheet-bar { flex: none; height: 21px; display: flex; border-top: 1px solid #8fa9d0; border-bottom: 1px solid #54779f; background: #9ab3d9; }
.sheet-tabs { flex: 1141 1 0; display: flex; min-width: 0; background: linear-gradient(#7f9fd0, #9fb8dc 40%); }
.nav { width: 79px; display: flex; justify-content: space-around; padding: 0 3px 0 1px; background: linear-gradient(#d8e6f8, #bad2f2 60%, #d6e7fb); }
.stab { position: relative; z-index: 0; padding: 2px 0 0 4px; margin-right: 12px; font: 15px/17px "Liberation Mono", monospace; color: #2a5294; }
.stab::before { content: ""; position: absolute; z-index: -1; inset: 0 -10px 0 -6px; border: 1px solid #7e98c4; border-top: 0; box-shadow: inset 1px -1px #eef5fd; background: linear-gradient(#d8e6f8, #bad2f2 60%, #d6e7fb); transform: skewX(-33deg); }
.stab.first { padding: 2px 6px 0 9px; margin: 0; }
.stab.first::before { inset: 0; transform: none; }
.stab.current { z-index: 1; padding-left: 10px; }
.stab.current::before { inset: 0 -8px 0 8px; background: #fff; border-color: #fff #7e98c4 #fff #fff; box-shadow: -8px 0 #fff; }
.stab.new { padding: 0 0 0 4px; }
.hscroll { flex: 757 1 0; display: flex; min-width: 0; padding-right: 22px; background: linear-gradient(90deg, #7896c2 calc(100% - 20px), #7b9cd2 0); }
.hscroll .split { width: 7px; border: 2px solid #f2f7fd; border-right-width: 3px; background: #5c80ae; }
.hscroll .flat { width: 22px; }
.hscroll .left { border: 6px solid transparent; border-right-color: #3c4f78; border-left: 0; }
.hscroll .right { border: 6px solid transparent; border-left-color: #3c4f78; border-right: 0; }
.hscroll .thumb { flex: 1; margin: 0 104px 0 52px; display: flex; align-items: center; justify-content: center; border: 1px solid #54709c; border-radius: 2px; background: linear-gradient(#f0f2f6, #dadfe8 45%, #b6c3d8 55%, #c7d2e2); }
.hscroll .thumb i { width: 8px; height: 8px; background: repeating-linear-gradient(90deg, #66758f 0 1px, #e4e9f0 1px 2px); }

/* Status bar */
.status { flex: none; height: 26px; display: flex; justify-content: space-between; background: linear-gradient(#d7e6f9, #c4dbf8 35%, #b0cef2 42%, #d0e2f8 85%, #b5d0f2); }
.ready { width: 47px; padding: 2px 0 0 7px; color: #0e2a5c; border-right: 1px solid #8cabd6; }
.zoom { display: flex; align-items: center; padding: 0 5px; border-left: 2px solid #6f93c8; background: linear-gradient(#b9d2f4, #9bbdec 35%, #7d9fd8 50%, #85aee4); }
.views { display: flex; height: 23px; border: 1px solid #6a90c4; border-radius: 2px; background: linear-gradient(#c6dbf6, #aecbf0 50%, #cfe3fb); }
.views button { width: 23px; }
.views .on { background: linear-gradient(#fbd9ae, #fda440 50%, #ffe48f); }
.percent { width: 57px; padding: 0 0 2px 7px; font-size: 16px; color: #0e2a5c; }
.round { width: 20px; height: 20px; border: 1px solid #56739f; border-radius: 50%; background: linear-gradient(#f2f6fc, #c3d2e8 50%, #e6eef8); }
.zoom input { appearance: none; width: 127px; height: 20px; background: linear-gradient(transparent 9px, #5f80b4 9px 10px, #d4e4f8 10px 11px, transparent 11px); }
.zoom input::-webkit-slider-thumb { appearance: none; width: 11px; height: 16px; background: linear-gradient(90deg, #4d6a98 1px, #f2f6fc 1px 5px, #7890b8 5px 6px, #f2f6fc 6px 10px, #4d6a98 10px); clip-path: polygon(0 0, 100% 0, 100% 65%, 50% 100%, 0 65%); }
```
FILE: script.js
```js
// The last column is only partly in view and has no visible letter.
const letters = [..."CDEFGHIJKLMNOPQRSTUVW", ""];
const head = document.getElementById("letters");
for (const l of letters) {
  const th = document.createElement("th");
  th.textContent = l;
  head.append(th);
}

// Each row: column letter -> value
const data = {};
const put = (row, col, value) => { (data[row] ||= {})[col] = value; };
put(1, "C", "x"); put(1, "D", "y");
put(1, "G", "slope"); put(1, "H", -1);
put(2, "G", "intercept"); put(2, "H", 4);
put(3, "G", "x"); put(3, "H", "y");
for (let row = 2; row <= 29; row++) { put(row, "C", row - 2); put(row, "D", 6 - row); }
for (let row = 4; row <= 29; row++) { put(row, "G", row - 4); put(row, "H", 8 - row); }
put(20, "R", "The flag is under this nicely made chart.");

const body = document.getElementById("rows");
for (let row = 1; row <= 29; row++) {
  const tr = document.createElement("tr");
  tr.innerHTML = `<th>${row}</th>`;
  for (let c = 0; c < letters.length; c++) {
    const td = document.createElement("td");
    const v = data[row]?.[letters[c]];
    if (typeof v === "number") td.innerHTML = v < 0 ? `<i>-</i>${-v}` : v;
    else if (v) {
      td.className = "text";
      td.textContent = v;
      if (v.length > 20) { td.colSpan = 5; c += 4; }
    }
    tr.append(td);
  }
  body.append(tr);
}

// Scatter chart
const px = x => 67 + x * 480 / 35;
const py = y => 110 - y * 8.325;
let s = `<rect class="frame" x=".5" y=".5" width="1158" height="386" rx="5"/>
<rect class="area" x="6.5" y="6.5" width="1146" height="374" rx="7"/>`;
for (let y = 10; y >= -30; y -= 5) {
  s += `<path class="axis" d="M62 ${Math.floor(py(y)) + .5}H547"/>`;
  s += `<text x="50" y="${Math.floor(py(y)) + 5}" text-anchor="end">${y}</text>`;
}
s += `<path class="axis" d="M66.5 27V360"/>`;
for (let x = 0; x <= 35; x += 5) {
  s += `<path class="axis" d="M${Math.round(px(x)) - .5} 110v6"/>`;
  s += `<text x="${Math.round(px(x))}" y="144" text-anchor="middle">${x}</text>`;
}
const mark = (x, y) => `<path class="mark" d="M${x} ${y - 7}l7 7-7 7-7-7z"/>`;
for (let x = 1; x <= 32; x++) s += mark(px(x), py(5 - x));
s += mark(592, py(-10));
for (let i = 0; i < 4; i++) {
  s += `<rect class="grip" x="${328 + i * 4}" y="2" width="2" height="2"/>`;
  s += `<rect class="grip" x="${328 + i * 4}" y="382" width="2" height="2"/>`;
  s += `<rect class="grip" x="2" y="${186 + i * 4}" width="2" height="2"/>`;
}
for (const y of [3, 7, 378, 382]) s += `<rect class="grip" x="2" y="${y}" width="2" height="2"/><rect class="grip" x="6" y="${y}" width="2" height="2"/>`;
document.getElementById("chart").innerHTML = s;
```
